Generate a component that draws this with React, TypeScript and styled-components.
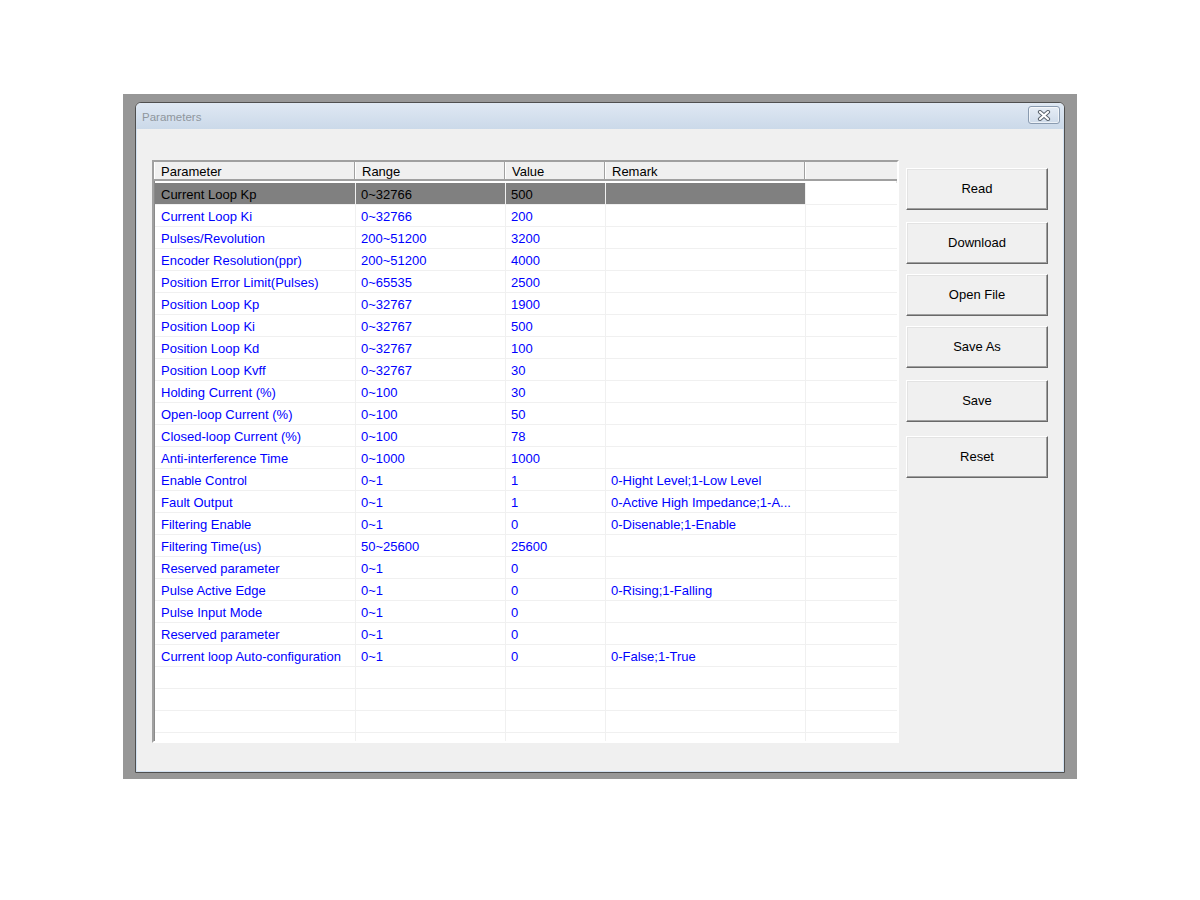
import React from "react";
import styled, { createGlobalStyle } from "styled-components";

const Global = createGlobalStyle`
  html, body { margin: 0; padding: 0; background: #ffffff; }
  body { font-family: "Liberation Sans", Arial, sans-serif; }
  * { box-sizing: border-box; }
`;

const Page = styled.div`
  padding: 94px 0 0 123px;
`;

const Frame = styled.div`
  width: 954px;
  height: 685px;
  background: #979797;
  padding: 8px 12px 6px 12px;
  display: flex;
`;

const Window = styled.div`
  flex: 1;
  display: flex;
  flex-direction: column;
  border: 1px solid #4f4f4f;
  border-radius: 6px 6px 0 0;
  overflow: hidden;
  background: #f0f0f0;
`;

const TitleBar = styled.div`
  height: 26px;
  flex: none;
  display: flex;
  align-items: flex-start;
  justify-content: space-between;
  background: linear-gradient(#dfe8f3, #cbd9e9);
  padding: 0 4px 0 6px;
`;

const TitleText = styled.span`
  font-family: "Liberation Sans", Arial, sans-serif;
  font-size: 11.5px;
  color: #8f969d;
  line-height: 28px;
`;

const CloseButton = styled.div`
  margin-top: 3px;
  width: 32px;
  height: 18px;
  border: 1px solid #8a9bb0;
  border-radius: 3px;
  background: linear-gradient(#e6edf6, #cfdbea);
  box-shadow: inset 0 0 0 1px rgba(255, 255, 255, 0.6);
  display: flex;
  align-items: center;
  justify-content: center;
`;

const Body = styled.div`
  flex: 1;
  display: flex;
  align-items: flex-start;
  border: 1px solid #d2e1f1;
  border-top: none;
  padding: 31px 0 0 15px;
`;

const Table = styled.div`
  width: 747px;
  height: 583px;
  border-style: solid;
  border-width: 2px;
  border-color: #a0a0a0 #ffffff #ffffff #a0a0a0;
  box-shadow: inset 1px 1px 0 #8a8a8a, inset -1px -1px 0 #e3e3e3;
  background: #ffffff;
  display: flex;
  flex-direction: column;
  overflow: hidden;
`;

const cols = "201px 150px 100px 200px 1fr";

const HeaderRow = styled.div`
  display: grid;
  grid-template-columns: ${cols};
  height: 19px;
  flex: none;
  background: #f0f0f0;
  border-bottom: 2px solid #a0a0a0;
`;

const HeaderCell = styled.div<{ $last?: boolean }>`
  border-left: 1px solid #ffffff;
  border-right: ${(p) => (p.$last ? "none" : "1px solid #a0a0a0")};
  padding: 3px 0 0 6px;
  font-size: 13px;
  line-height: 14px;
  color: #000000;
  white-space: nowrap;
  overflow: hidden;
`;

const Rows = styled.div`
  margin-top: 2px;
  padding-left: 1px;
  flex: 1;
  overflow: hidden;
`;

const Row = styled.div`
  display: grid;
  grid-template-columns: ${cols};
  height: 22px;
`;

const Cell = styled.div<{ $selected?: boolean; $last?: boolean; $first?: boolean }>`
  border-bottom: 1px solid #f0f0f0;
  border-right: ${(p) => (p.$last ? "none" : "1px solid #f0f0f0")};
  background: ${(p) => (p.$selected ? "#808080" : "#ffffff")};
  color: ${(p) => (p.$selected ? "#000000" : "#0000ff")};
  padding: 3px 0 0 ${(p) => (p.$first ? 6 : 5)}px;
  font-size: 13px;
  line-height: 18px;
  white-space: nowrap;
  overflow: hidden;
`;

const ButtonColumn = styled.div`
  margin-left: 7px;
  padding-top: 8px;
  display: flex;
  flex-direction: column;
`;

const Button = styled.button<{ $gap: number }>`
  margin-top: ${(p) => p.$gap}px;
  width: 142px;
  height: 42px;
  background: #f0f0f0;
  border-style: solid;
  border-width: 1px;
  border-color: #ffffff #696969 #696969 #ffffff;
  box-shadow: inset -1px -1px 0 #a0a0a0, inset 1px 1px 0 #e3e3e3;
  font-family: "Liberation Sans", Arial, sans-serif;
  font-size: 13px;
  color: #000000;
  padding: 0 0 2px 0;
  cursor: default;
`;

type RowData = [string, string, string, string];

const data: RowData[] = [
  ["Current Loop Kp", "0~32766", "500", ""],
  ["Current Loop Ki", "0~32766", "200", ""],
  ["Pulses/Revolution", "200~51200", "3200", ""],
  ["Encoder Resolution(ppr)", "200~51200", "4000", ""],
  ["Position Error Limit(Pulses)", "0~65535", "2500", ""],
  ["Position Loop Kp", "0~32767", "1900", ""],
  ["Position Loop Ki", "0~32767", "500", ""],
  ["Position Loop Kd", "0~32767", "100", ""],
  ["Position Loop Kvff", "0~32767", "30", ""],
  ["Holding Current (%)", "0~100", "30", ""],
  ["Open-loop Current (%)", "0~100", "50", ""],
  ["Closed-loop Current (%)", "0~100", "78", ""],
  ["Anti-interference Time", "0~1000", "1000", ""],
  ["Enable Control", "0~1", "1", "0-Hight Level;1-Low Level"],
  ["Fault Output", "0~1", "1", "0-Active High Impedance;1-A..."],
  ["Filtering Enable", "0~1", "0", "0-Disenable;1-Enable"],
  ["Filtering Time(us)", "50~25600", "25600", ""],
  ["Reserved parameter", "0~1", "0", ""],
  ["Pulse Active Edge", "0~1", "0", "0-Rising;1-Falling"],
  ["Pulse Input Mode", "0~1", "0", ""],
  ["Reserved parameter", "0~1", "0", ""],
  ["Current loop Auto-configuration", "0~1", "0", "0-False;1-True"],
  ["", "", "", ""],
  ["", "", "", ""],
  ["", "", "", ""],
  ["", "", "", ""],
];

const buttons: [string, number][] = [
  ["Read", 0],
  ["Download", 12],
  ["Open File", 10],
  ["Save As", 10],
  ["Save", 12],
  ["Reset", 14],
];

const CloseIcon = () => (
  <svg width="16" height="11" viewBox="0 0 16 11">
    <path d="M4 2 L12 9 M12 2 L4 9" stroke="#5d6670" strokeWidth="4.2" strokeLinecap="round" />
    <path d="M4 2 L12 9 M12 2 L4 9" stroke="#ffffff" strokeWidth="2.2" strokeLinecap="round" />
  </svg>
);

export default function App() {
  return (
    <>
      <Global />
      <Page>
        <Frame>
          <Window>
            <TitleBar>
              <TitleText>Parameters</TitleText>
              <CloseButton>
                <CloseIcon />
              </CloseButton>
            </TitleBar>
            <Body>
              <Table>
                <HeaderRow>
                  <HeaderCell>Parameter</HeaderCell>
                  <HeaderCell>Range</HeaderCell>
                  <HeaderCell>Value</HeaderCell>
                  <HeaderCell>Remark</HeaderCell>
                  <HeaderCell $last />
                </HeaderRow>
                <Rows>
                  {data.map((r, i) => {
                    const sel = i === 0;
                    return (
                      <Row key={i}>
                        <Cell $selected={sel} $first>{r[0]}</Cell>
                        <Cell $selected={sel}>{r[1]}</Cell>
                        <Cell $selected={sel}>{r[2]}</Cell>
                        <Cell $selected={sel}>{r[3]}</Cell>
                        <Cell $last />
                      </Row>
                    );
                  })}
                </Rows>
              </Table>
              <ButtonColumn>
                {buttons.map(([label, gap]) => (
                  <Button key={label} $gap={gap}>
                    {label}
                  </Button>
                ))}
              </ButtonColumn>
            </Body>
          </Window>
        </Frame>
      </Page>
    </>
  );
}
